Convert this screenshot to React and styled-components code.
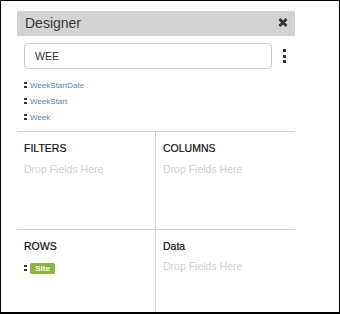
import React from 'react'
import styled, { createGlobalStyle } from 'styled-components'

const GlobalStyle = createGlobalStyle`
  html, body {
    margin: 0;
    padding: 0;
    background: #fff;
  }
  * {
    box-sizing: border-box;
  }
`

const fields = ['WeekStartDate', 'WeekStart', 'Week']

const App = () => {
  return (
    <Frame>
      <GlobalStyle />
      <Panel>
        <Header>
          <Title>Designer</Title>
          <CloseButton aria-label="close">
            <svg width="10" height="9" viewBox="0 0 10 9">
              <path d="M1.5 1 L8.5 8 M8.5 1 L1.5 8" stroke="#333" strokeWidth="2.8" strokeLinecap="butt" />
            </svg>
          </CloseButton>
        </Header>

        <SearchRow>
          <SearchInput type="text" defaultValue="WEE" />
          <Kebab>
            <Dot />
            <Dot />
            <Dot />
          </Kebab>
        </SearchRow>

        <FieldList>
          {fields.map((f) => (
            <FieldItem key={f}>
              <Handle />
              <FieldName>{f}</FieldName>
            </FieldItem>
          ))}
        </FieldList>

        <Zones>
          <Zone $right>
            <ZoneTitle>FILTERS</ZoneTitle>
            <DropHint>Drop Fields Here</DropHint>
          </Zone>
          <Zone>
            <ZoneTitle>COLUMNS</ZoneTitle>
            <DropHint>Drop Fields Here</DropHint>
          </Zone>
          <Zone $right $top>
            <ZoneTitle>ROWS</ZoneTitle>
            <Chip>
              <Handle />
              <Badge>Site</Badge>
            </Chip>
          </Zone>
          <Zone $top>
            <ZoneTitle>Data</ZoneTitle>
            <DropHint $tight>Drop Fields Here</DropHint>
          </Zone>
        </Zones>
      </Panel>
    </Frame>
  )
}

export default App

const Frame = styled.div`
  width: 340px;
  height: 314px;
  border: 1px solid #000;
  border-bottom-width: 2px;
  padding: 10px 0 0 16px;
  background: #fff;
  font-family: "Liberation Sans", Arial, sans-serif;
`
const Panel = styled.div`
  width: 278px;
  height: 100%;
  display: flex;
  flex-direction: column;
`
const Header = styled.div`
  height: 25px;
  background-color: #d3d3d3;
  display: flex;
  align-items: center;
  justify-content: space-between;
  padding: 0 7px 0 8px;
`
const Title = styled.span`
  font-size: 14px;
  color: #3a3a3a;
  line-height: 25px;
`
const CloseButton = styled.span`
  display: flex;
  align-items: center;
  margin-top: -3px;
`
const SearchRow = styled.div`
  display: flex;
  align-items: center;
  margin-top: 7px;
  padding-left: 7px;
`
const SearchInput = styled.input`
  width: 248px;
  height: 26px;
  border: 1px solid #ccc;
  border-radius: 4px;
  padding: 0 10px;
  font-family: "Liberation Sans", Arial, sans-serif;
  font-size: 10.5px;
  color: #333;
  outline: none;
`
const Kebab = styled.div`
  display: flex;
  flex-direction: column;
  gap: 2.5px;
  margin-left: 11px;
`
const Dot = styled.span`
  width: 3px;
  height: 3px;
  background: #333;
`
const FieldList = styled.ul`
  list-style: none;
  margin: 8px 0 6px;
  padding: 0 0 0 7px;
`
const FieldItem = styled.li`
  display: flex;
  align-items: center;
  height: 16px;
`
const Handle = styled.span`
  width: 3px;
  height: 6px;
  margin-right: 3px;
  background: linear-gradient(#333 0 2px, transparent 2px 4px, #333 4px 6px);
`
const FieldName = styled.span`
  font-size: 8px;
  color: #5585ba;
`
const Zones = styled.div`
  flex: 1;
  display: grid;
  grid-template-columns: 139px 1fr;
  grid-template-rows: 97px 1fr;
  border-top: 1px solid #d3d3d3;
`
const Zone = styled.div`
  padding: 9px 7px 0;
  border-right: ${(p) => (p.$right ? '1px solid #d3d3d3' : 'none')};
  border-top: ${(p) => (p.$top ? '1px solid #d3d3d3' : 'none')};
`
const ZoneTitle = styled.div`
  font-size: 10.5px;
  line-height: 14px;
  color: #111;
  -webkit-text-stroke: 0.2px #111;
`
const DropHint = styled.div`
  font-size: 10.5px;
  line-height: 14px;
  color: #d0d0d0;
  margin-top: ${(p) => (p.$tight ? '6px' : '7px')};
`
const Chip = styled.div`
  display: flex;
  align-items: center;
  margin-top: 8px;
  height: 14px;
`
const Badge = styled.span`
  display: inline-flex;
  align-items: center;
  justify-content: center;
  width: 25px;
  height: 11px;
  background: #8cb33c;
  border-radius: 2px;
  color: #fff;
  font-size: 8px;
  font-weight: bold;
`
